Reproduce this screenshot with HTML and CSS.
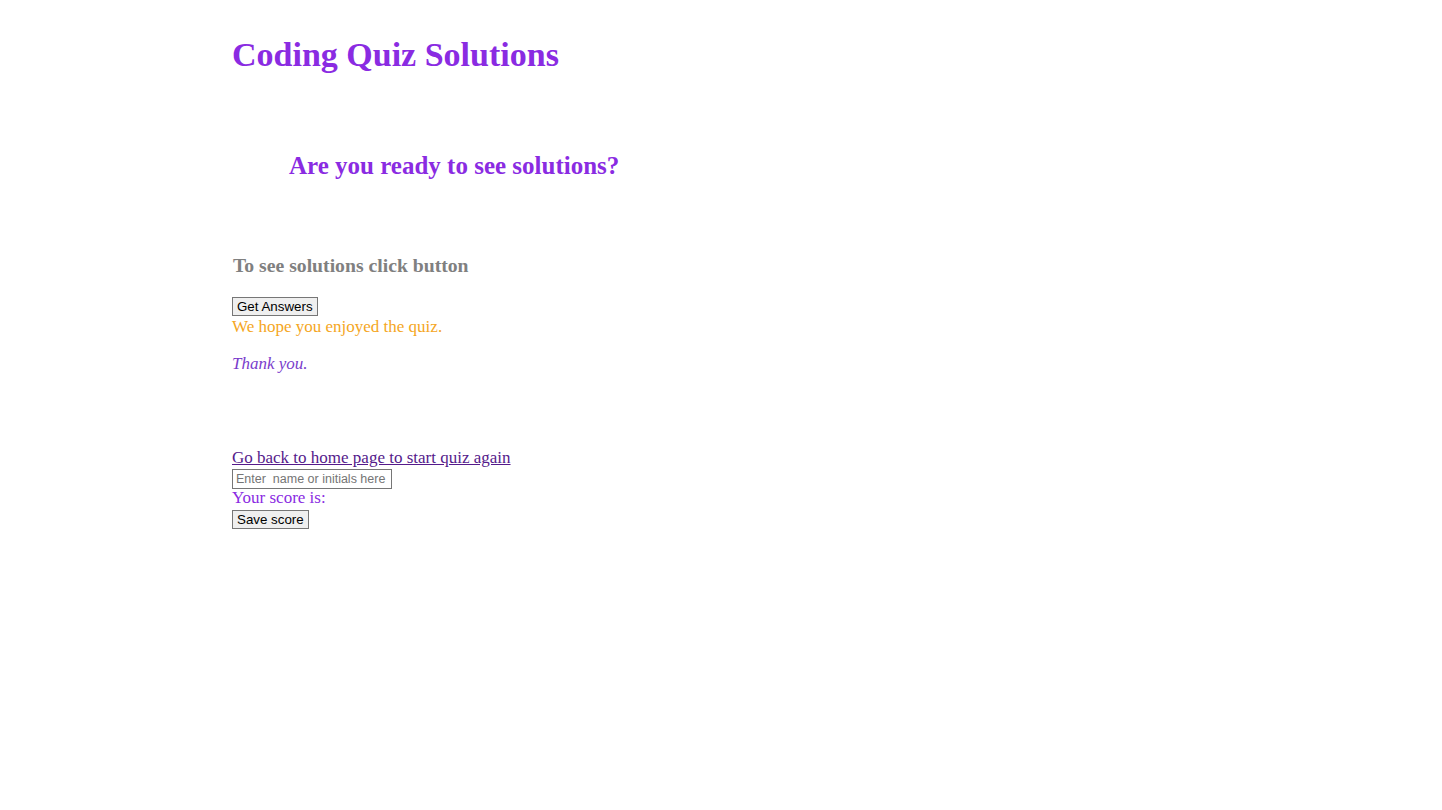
FILE: index.html
```html
<!DOCTYPE html>
<html lang="en">
<head>
<meta charset="utf-8">
<title>Coding Quiz Solutions</title>
<link rel="stylesheet" href="styles.css">
</head>
<body>
<main class="page">
  <h1 class="title">Coding Quiz Solutions</h1>
  <h2 class="ready">Are you ready to see solutions?</h2>
  <h3 class="hint">To see solutions click button</h3>
  <button class="btn" type="button">Get Answers</button>
  <p class="hope">We hope you enjoyed the quiz.</p>
  <p class="thanks">Thank you.</p>
  <a class="home" href="#">Go back to home page to start quiz again</a>
  <input class="initials" type="text" placeholder="Enter  name or initials here">
  <div class="score">Your score is:</div>
  <button class="btn" type="button">Save score</button>
</main>
</body>
</html>
```
FILE: styles.css
```css
body {
  margin: 8px;
  font-family: "Liberation Serif", "Times New Roman", serif;
  background: #fff;
}
.page {
  padding-left: 224px;
  display: flex;
  flex-direction: column;
  align-items: flex-start;
}
.title {
  color: #8a2be2;
  font-size: 34px;
  margin: 28px 0 0;
}
.ready {
  color: #8a2be2;
  font-size: 25px;
  margin: 78px 0 0 57px;
}
.hint {
  color: #808080;
  font-size: 19.7px;
  margin: 74px 0 0 1px;
}
.btn {
  font-family: Arial, "Liberation Sans", sans-serif;
  font-size: 13.33px;
  margin-top: 20px;
  padding: 1px 4px;
  border: 1px solid #767676;
  border-radius: 0;
  background: #efefef;
  color: #000;
}
.hope {
  color: #f5a623;
  font-size: 17px;
  margin: 1px 0 0;
}
.thanks {
  color: #7a3ccc;
  font-style: italic;
  font-size: 17px;
  margin: 17px 0 0;
}
.home {
  color: #551a8b;
  font-size: 17px;
  margin-top: 74px;
}
.initials {
  font-family: Arial, "Liberation Sans", sans-serif;
  font-size: 12.5px;
  width: 160px;
  height: 20px;
  box-sizing: border-box;
  padding: 1px 3px;
  border: 1px solid #767676;
  margin: 1px 0 0;
}
.initials::placeholder {
  color: #757575;
}
.score {
  color: #8a2be2;
  font-size: 17px;
  margin-top: -1px;
}
.score + .btn {
  margin-top: 2px;
}
```
